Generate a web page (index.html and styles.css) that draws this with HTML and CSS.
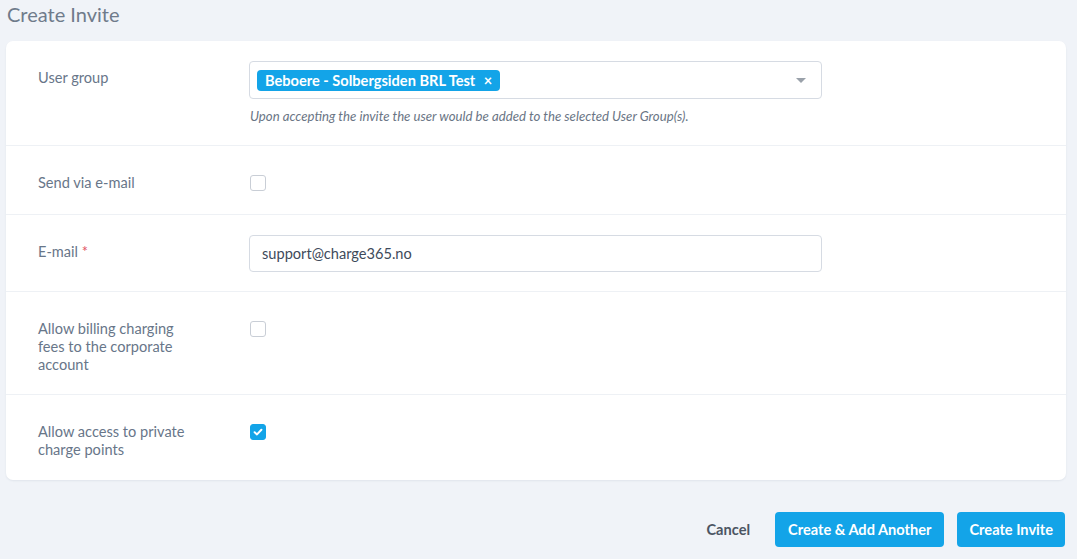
FILE: index.html
```html
<!DOCTYPE html>
<html lang="en">
<head>
<meta charset="utf-8">
<title>Create Invite</title>
<link rel="stylesheet" href="styles.css">
</head>
<body>
<div class="page">
  <h1 class="title">Create Invite</h1>
  <div class="card">
    <div class="row">
      <label class="label">User group</label>
      <div class="control">
        <div class="select">
          <span class="tag">Beboere - Solbergsiden BRL Test <span class="tag-x">×</span></span>
          <span class="caret"></span>
        </div>
        <p class="help">Upon accepting the invite the user would be added to the selected User Group(s).</p>
      </div>
    </div>
    <div class="row">
      <label class="label">Send via e-mail</label>
      <div class="control"><span class="check"></span></div>
    </div>
    <div class="row row-input">
      <label class="label">E-mail <span class="req">*</span></label>
      <div class="control"><div class="input">support@charge365.no</div></div>
    </div>
    <div class="row">
      <label class="label">Allow billing charging fees to the corporate account</label>
      <div class="control"><span class="check"></span></div>
    </div>
    <div class="row last">
      <label class="label">Allow access to private charge points</label>
      <div class="control"><span class="check on"><svg viewBox="0 0 16 16" width="16" height="16"><path d="M4.6 8.2 L7 10.4 L11.4 5.8" fill="none" stroke="#fff" stroke-width="2" stroke-linecap="round" stroke-linejoin="round"/></svg></span></div>
    </div>
  </div>
  <div class="actions">
    <button class="btn-link">Cancel</button>
    <button class="btn btn-wide">Create &amp; Add Another</button>
    <button class="btn">Create Invite</button>
  </div>
</div>
</body>
</html>
```
FILE: styles.css
```css
* { box-sizing: border-box; }
html, body { margin: 0; padding: 0; }
body {
  background: #f0f3f8;
  font-family: "Lato", "Noto Sans", sans-serif;
  color: #687689;
  width: 1077px;
  height: 559px;
  overflow: hidden;
}
.page { padding: 0 11px 0 6px; }
.title {
  margin: 0;
  font-size: 20px;
  font-weight: 400;
  color: #6f7b8b;
  line-height: 28px;
  padding-left: 1px;
}
.card {
  margin-top: 13px;
  background: #fff;
  border-radius: 7px;
  box-shadow: 0 1px 2px rgba(40, 60, 90, 0.08);
}
.row {
  display: grid;
  grid-template-columns: 243px 573px;
  padding: 20px 0;
  border-bottom: 1px solid #eef1f5;
}
.row.row-input { padding-bottom: 19px; }
.row.last { border-bottom: none; padding-bottom: 21px; }
.label {
  padding: 8px 0 0 32px;
  font-size: 14.6px;
  line-height: 18px;
  color: #687689;
  max-width: 196px;
}
.req { color: #e25563; }
.control { display: flex; flex-direction: column; min-height: 28px; }
.select {
  height: 38px;
  border: 1px solid #d6dbe3;
  border-radius: 4px;
  display: flex;
  align-items: center;
  padding: 0 8px 0 7px;
}
.tag {
  background: #13a4e8;
  color: #fff;
  font-weight: 700;
  font-size: 14.6px;
  height: 21px;
  line-height: 21px;
  padding: 0 8px;
  border-radius: 4px;
}
.tag-x { margin-left: 5px; }
.caret {
  margin-left: auto;
  margin-right: 7px;
  width: 0; height: 0;
  border-left: 5px solid transparent;
  border-right: 5px solid transparent;
  border-top: 5px solid #9aa1aa;
}
.help {
  margin: 8px 0 0 1px;
  font-size: 13.2px;
  font-style: italic;
  line-height: 18px;
  color: #6a7585;
}
.check {
  margin-top: 9px;
  margin-left: 1px;
  width: 16px; height: 16px;
  border: 1px solid #c9ced6;
  border-radius: 3px;
  display: block;
}
.check.on {
  background: #13a4e8;
  border-color: #13a4e8;
}
.check.on svg { display: block; margin: -1px; }
.input {
  height: 37px;
  border: 1px solid #d6dbe3;
  border-radius: 4px;
  padding: 0 12px;
  display: flex;
  align-items: center;
  font-size: 14.6px;
  color: #3e4a5b;
}
.actions {
  display: flex;
  justify-content: flex-end;
  gap: 13px;
  margin-top: 32px;
  margin-right: 1px;
}
.btn, .btn-link {
  font-family: inherit;
  font-size: 14.6px;
  font-weight: 700;
  height: 35px;
  border: none;
  border-radius: 4px;
  cursor: pointer;
}
.btn {
  background: #13a4e8;
  color: #fff;
  padding: 0 12px;
}
.btn-wide { padding: 0 13px; }
.btn-link {
  background: transparent;
  color: #4b5563;
  padding: 0 12px;
}
```
